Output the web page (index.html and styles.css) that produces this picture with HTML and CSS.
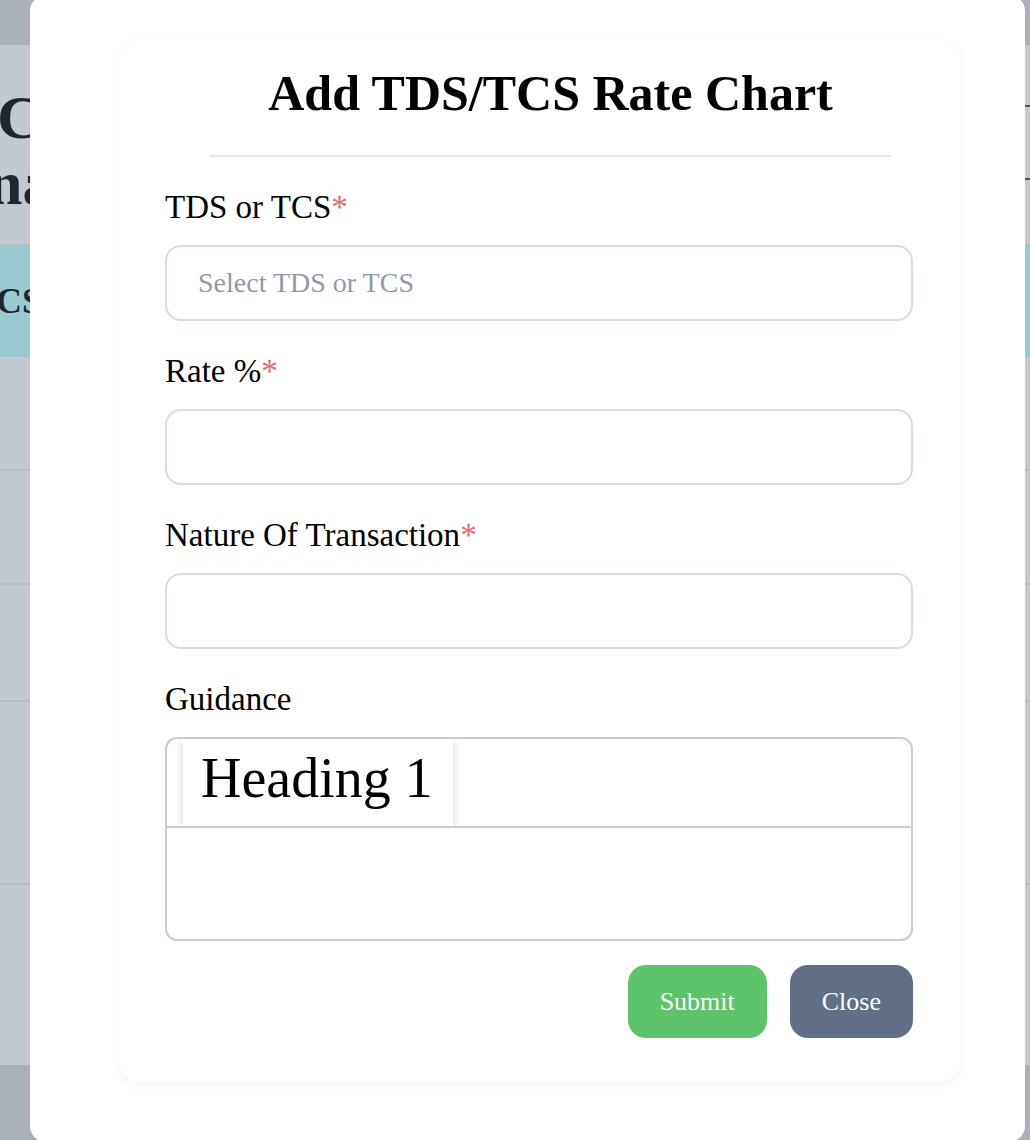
FILE: index.html
```html
<!DOCTYPE html>
<html lang="en">
<head>
<meta charset="utf-8">
<title>Add TDS/TCS Rate Chart</title>
<link rel="stylesheet" href="styles.css">
</head>
<body>
  <div class="page">
    <div class="topbar"></div>
    <div class="page-head">
      <div class="page-title">
        <div class="pt-line">C</div>
        <div class="pt-line shift">na</div>
      </div>
      <div class="head-side">
        <div class="side-row first"></div>
        <div class="side-row second"></div>
      </div>
    </div>
    <div class="table">
      <div class="thead"><span class="thead-text">CS</span></div>
      <div class="trow h114"></div>
      <div class="trow h114"></div>
      <div class="trow h117"></div>
      <div class="trow h183"></div>
      <div class="trow last h180"></div>
    </div>
    <div class="footer"></div>
  </div>

  <div class="overlay">
    <div class="modal">
      <div class="card">
        <h2 class="title">Add TDS/TCS Rate Chart</h2>
        <div class="divider"></div>

        <div class="field">
          <label class="label">TDS or TCS<span class="req">*</span></label>
          <div class="input placeholder">Select TDS or TCS</div>
        </div>

        <div class="field">
          <label class="label">Rate %<span class="req">*</span></label>
          <div class="input"></div>
        </div>

        <div class="field">
          <label class="label">Nature Of Transaction<span class="req">*</span></label>
          <div class="input"></div>
        </div>

        <div class="field last">
          <label class="label">Guidance</label>
          <div class="editor">
            <div class="toolbar">
              <div class="picker">Heading 1</div>
            </div>
            <div class="editor-body"></div>
          </div>
        </div>

        <div class="actions">
          <button class="btn submit">Submit</button>
          <button class="btn close">Close</button>
        </div>
      </div>
    </div>
  </div>
</body>
</html>
```
FILE: styles.css
```css
html, body {
  margin: 0;
  padding: 0;
}

body {
  width: 1030px;
  height: 1140px;
  overflow: hidden;
  background: #c3c9d1;
  font-family: "Liberation Serif", "Times New Roman", serif;
}

/* ---------- background page ---------- */
.page {
  display: flex;
  flex-direction: column;
  height: 1140px;
}

.topbar {
  height: 45px;
  background: #abb1b9;
}

.page-head {
  height: 200px;
  display: flex;
  background: #c3c9d1;
  overflow: hidden;
}

.page-title {
  font-weight: bold;
  font-size: 62px;
  line-height: 66px;
  color: #1f2630;
  padding-top: 39px;
  white-space: nowrap;
}

.pt-line {
  margin-left: -3px;
}

.pt-line.shift {
  margin-left: -12px;
}

.head-side {
  margin-left: auto;
  width: 60px;
}

.side-row {
  border-bottom: 2px solid #4b5360;
}

.side-row.first {
  height: 60px;
}

.side-row.second {
  height: 71px;
}

.table {
  display: flex;
  flex-direction: column;
}

.thead {
  height: 112px;
  background: #99c9d1;
  border-top: 1px solid #b3bac4;
  margin-top: -1px;
  overflow: hidden;
  white-space: nowrap;
}

.thead-text {
  display: inline-block;
  margin-left: -4px;
  font-weight: 700;
  font-size: 36px;
  line-height: 112px;
  color: #1f2630;
}

.trow {
  border-bottom: 2px solid #b6bcc6;
  box-sizing: border-box;
}

.trow.last {
  border-bottom: none;
}

.h114 { height: 114px; }
.h117 { height: 117px; }
.h183 { height: 183px; }
.h180 { height: 180px; }

.footer {
  flex: 1;
  background: #a9b0b8;
}

/* ---------- modal ---------- */
.overlay {
  position: fixed;
  inset: 0;
  padding-left: 30px;
}

.modal {
  width: 995px;
  height: 1147px;
  margin-top: -5px;
  background: #ffffff;
  border-radius: 16px;
  padding-top: 45px;
  box-sizing: border-box;
}

.card {
  margin: 0 65px 0 89px;
  background: #ffffff;
  border-radius: 20px;
  box-shadow: 0 3px 10px rgba(0, 0, 0, 0.05);
  padding: 23px 47px 44px 46px;
}

.title {
  margin: 0 22px 0 45px;
  font-size: 50px;
  line-height: 60px;
  font-weight: bold;
  text-align: center;
  color: #000000;
}

.divider {
  height: 2px;
  background: #e8e9ed;
  margin: 32px 22px 30px 45px;
}

.field {
  margin-bottom: 30px;
}

.field.last {
  margin-bottom: 0;
}

.label {
  display: block;
  font-size: 33px;
  line-height: 40px;
  color: #000000;
  margin-bottom: 18px;
}

.req {
  color: #e36a68;
}

.input {
  height: 76px;
  box-sizing: border-box;
  border: 2px solid #d7dce5;
  border-radius: 16px;
  padding-left: 31px;
  display: flex;
  align-items: center;
  font-size: 28px;
}

.placeholder {
  color: #9298aa;
}

.editor {
  height: 204px;
  box-sizing: border-box;
  border: 2px solid #cccccc;
  border-radius: 12px;
  display: flex;
  flex-direction: column;
  overflow: hidden;
}

.toolbar {
  height: 87px;
  border-bottom: 2px solid #cccccc;
  padding-left: 16px;
  display: flex;
  overflow: hidden;
}

.picker {
  width: 252px;
  padding: 11px 0 0 18px;
  font-size: 56px;
  line-height: 56px;
  color: #000000;
  background: #ffffff;
  box-shadow: 0 2px 8px rgba(0, 0, 0, 0.18);
}

.editor-body {
  flex: 1;
}

.actions {
  display: flex;
  justify-content: flex-end;
  gap: 23px;
  margin-top: 24px;
}

.btn {
  height: 73px;
  border: none;
  border-radius: 18px;
  padding: 0 32px;
  font-family: "Liberation Serif", "Times New Roman", serif;
  font-size: 26px;
  color: #ffffff;
}

.btn.submit {
  background: #5ec46b;
}

.btn.close {
  background: #627087;
}
```
